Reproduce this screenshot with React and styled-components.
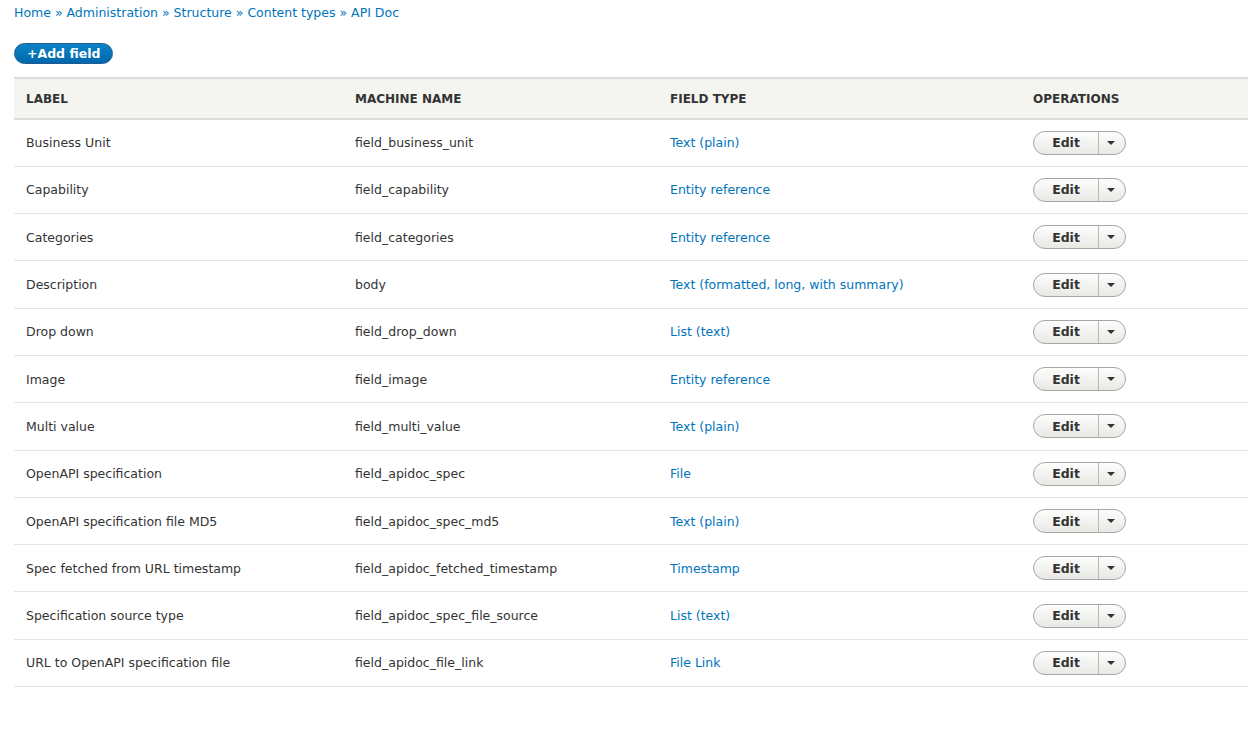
import React from 'react';
import styled, { createGlobalStyle } from 'styled-components';

const fields = [
  ['Business Unit', 'field_business_unit', 'Text (plain)'],
  ['Capability', 'field_capability', 'Entity reference'],
  ['Categories', 'field_categories', 'Entity reference'],
  ['Description', 'body', 'Text (formatted, long, with summary)'],
  ['Drop down', 'field_drop_down', 'List (text)'],
  ['Image', 'field_image', 'Entity reference'],
  ['Multi value', 'field_multi_value', 'Text (plain)'],
  ['OpenAPI specification', 'field_apidoc_spec', 'File'],
  ['OpenAPI specification file MD5', 'field_apidoc_spec_md5', 'Text (plain)'],
  ['Spec fetched from URL timestamp', 'field_apidoc_fetched_timestamp', 'Timestamp'],
  ['Specification source type', 'field_apidoc_spec_file_source', 'List (text)'],
  ['URL to OpenAPI specification file', 'field_apidoc_file_link', 'File Link'],
];

function App() {
  return (
    <Page>
      <GlobalStyle />
      <Breadcrumb>
        <Crumb>Home</Crumb> » <Crumb>Administration</Crumb> » <Crumb>Structure</Crumb> »{' '}
        <Crumb>Content types</Crumb> » <Crumb>API Doc</Crumb>
      </Breadcrumb>
      <AddButton>+Add field</AddButton>
      <Table>
        <thead>
          <tr>
            <Th $w={329}>Label</Th>
            <Th $w={315}>Machine name</Th>
            <Th $w={363}>Field type</Th>
            <Th>Operations</Th>
          </tr>
        </thead>
        <tbody>
          {fields.map(([label, machine, type]) => (
            <Row key={machine}>
              <Td>{label}</Td>
              <Td>{machine}</Td>
              <Td>
                <TypeLink>{type}</TypeLink>
              </Td>
              <Td>
                <Dropbutton>
                  <EditPart>Edit</EditPart>
                  <Toggle>
                    <Caret />
                  </Toggle>
                </Dropbutton>
              </Td>
            </Row>
          ))}
        </tbody>
      </Table>
    </Page>
  );
}

export default App;

/* Styles */

const GlobalStyle = createGlobalStyle`
  body {
    margin: 0;
    background: #fff;
    font-family: "DejaVu Sans", "Open Sans", sans-serif;
    color: #333;
  }
`;

const Page = styled.div`
  padding: 4px 0 0 14px;
  width: 1234px;
`;

const Breadcrumb = styled.div`
  font-size: 12.5px;
  line-height: 18px;
  color: #0074bd;
`;

const Crumb = styled.span`
  color: #0074bd;
`;

const AddButton = styled.div`
  display: inline-flex;
  align-items: center;
  margin-top: 21px;
  height: 21px;
  padding: 0 12px 0 12px;
  border-radius: 11px;
  background: linear-gradient(#0c83c7, #0067ab);
  border: 1px solid #1e5c90;
  box-sizing: border-box;
  color: #fff;
  font-size: 12.5px;
  font-weight: bold;
`;

const Table = styled.table`
  margin-top: 13px;
  width: 100%;
  border-collapse: collapse;
  font-size: 12.5px;
`;

const Th = styled.th`
  width: ${(p) => (p.$w ? `${p.$w}px` : 'auto')};
  box-sizing: border-box;
  height: 41px;
  padding: 0 12px;
  text-align: left;
  text-transform: uppercase;
  font-size: 12px;
  font-weight: bold;
  color: #333;
  background: #f4f4f1;
  border-top: 2px solid #dddcd8;
  border-bottom: 2px solid #dddcd8;
`;

const Row = styled.tr`
  height: 47.3px;
  border-bottom: 1px solid #e6e4df;
`;

const Td = styled.td`
  padding: 0 12px;
  vertical-align: middle;
  color: #333;
`;

const TypeLink = styled.span`
  color: #0074bd;
`;

const Dropbutton = styled.div`
  display: inline-flex;
  height: 24px;
  border: 1px solid #a6a6a6;
  border-radius: 12px;
  background: linear-gradient(#fdfdfd, #e8e8e4);
  box-sizing: border-box;
  overflow: hidden;
`;

const EditPart = styled.div`
  width: 64px;
  display: flex;
  align-items: center;
  justify-content: center;
  font-weight: bold;
  font-size: 12.5px;
  color: #333;
  border-right: 1px solid #b8b8b4;
`;

const Toggle = styled.div`
  width: 26px;
  display: flex;
  align-items: center;
  justify-content: center;
`;

const Caret = styled.span`
  width: 0;
  height: 0;
  border-left: 4px solid transparent;
  border-right: 4px solid transparent;
  border-top: 4px solid #333;
  margin-left: -2px;
`;
